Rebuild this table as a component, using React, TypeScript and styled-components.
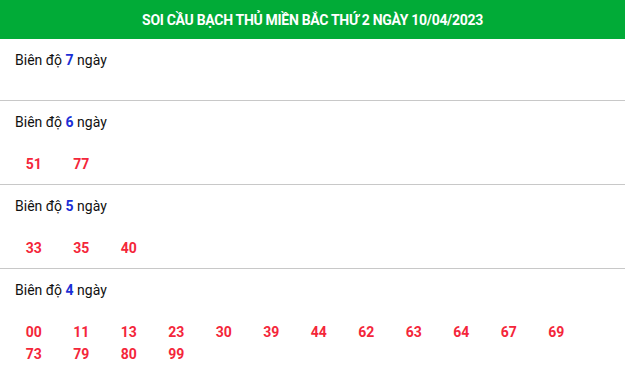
import React from "react";
import styled, { createGlobalStyle } from "styled-components";

const GlobalStyle = createGlobalStyle`
  body {
    margin: 0;
    background: #fff;
    font-family: Roboto, "Noto Sans", Arial, sans-serif;
  }
`;

const Wrapper = styled.div`
  width: 625px;
`;

const Header = styled.h2`
  margin: 0;
  height: 39px;
  background: #01ab37;
  color: #fff;
  display: flex;
  align-items: center;
  justify-content: center;
  font-size: 14px;
  font-weight: 700;
  text-transform: uppercase;
  letter-spacing: -0.3px;
`;

const Section = styled.div`
  padding: 10px 10px 9px;
  border-bottom: 1px solid #c8c8c8;
`;

const Label = styled.div`
  padding-left: 5px;
  font-size: 14px;
  line-height: 22px;
  color: #111;
`;

const Days = styled.b`
  color: #1b2fd6;
`;

const Numbers = styled.div`
  display: flex;
  flex-wrap: wrap;
  padding-top: 20px;
`;

const Num = styled.span`
  width: 47.5px;
  text-align: center;
  font-size: 14px;
  font-weight: 700;
  line-height: 22px;
  color: #f4263a;
`;

const data: { days: number; nums: string[] }[] = [
  { days: 7, nums: [] },
  { days: 6, nums: ["51", "77"] },
  { days: 5, nums: ["33", "35", "40"] },
  {
    days: 4,
    nums: ["00", "11", "13", "23", "30", "39", "44", "62", "63", "64", "67", "69", "73", "79", "80", "99"],
  },
];

export default function App() {
  return (
    <Wrapper>
      <GlobalStyle />
      <Header>Soi cầu bạch thủ miền Bắc thứ 2 ngày 10/04/2023</Header>
      {data.map((s) => (
        <Section key={s.days}>
          <Label>
            Biên độ <Days>{s.days}</Days> ngày
          </Label>
          <Numbers>
            {s.nums.map((n) => (
              <Num key={n}>{n}</Num>
            ))}
          </Numbers>
        </Section>
      ))}
    </Wrapper>
  );
}
